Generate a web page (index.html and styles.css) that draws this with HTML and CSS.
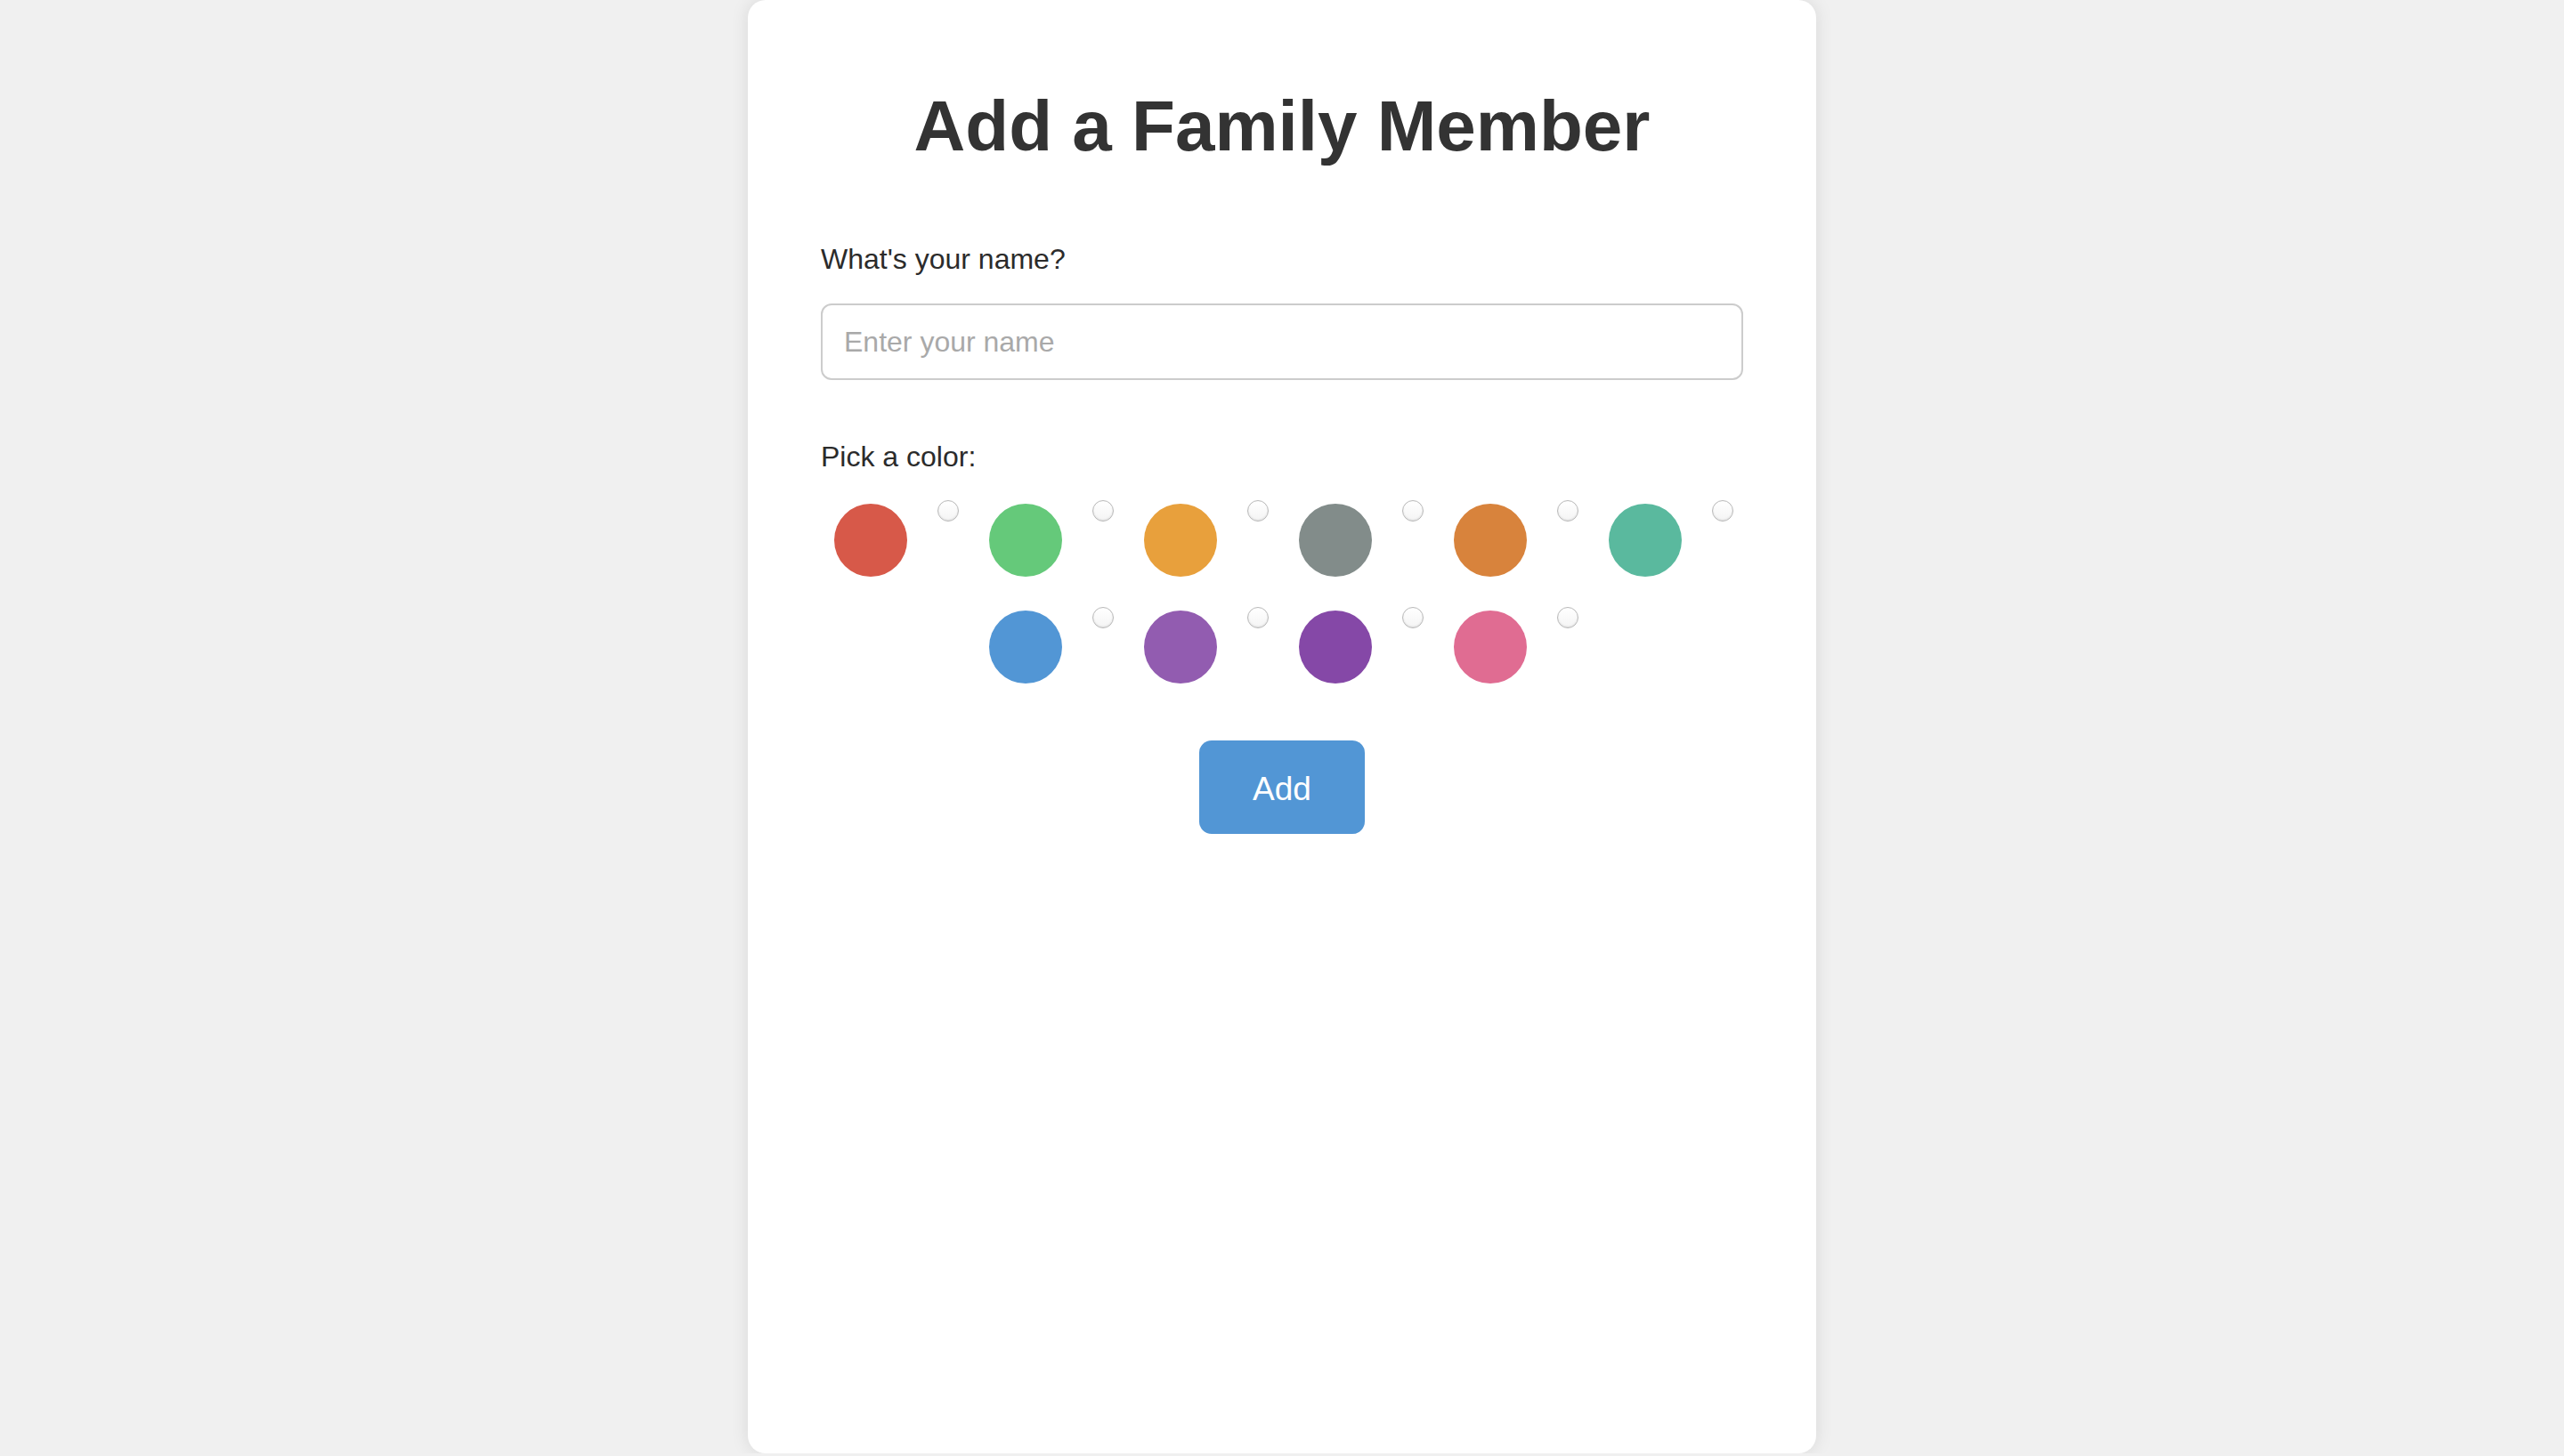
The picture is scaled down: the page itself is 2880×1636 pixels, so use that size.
FILE: index.html
```html
<!DOCTYPE html>
<html lang="en">
<head>
<meta charset="utf-8">
<title>Add a Family Member</title>
<link rel="stylesheet" href="styles.css">
</head>
<body>
<main class="card">
  <h1 class="title">Add a Family Member</h1>
  <form class="form">
    <label class="field-label" for="name">What's your name?</label>
    <input class="text-input" id="name" type="text" placeholder="Enter your name">
    <div class="field-label color-label">Pick a color:</div>
    <div class="swatches">
      <label class="swatch"><span class="dot c-red"></span><input class="radio" type="radio" name="color"></label>
      <label class="swatch"><span class="dot c-green"></span><input class="radio" type="radio" name="color"></label>
      <label class="swatch"><span class="dot c-yellow"></span><input class="radio" type="radio" name="color"></label>
      <label class="swatch"><span class="dot c-gray"></span><input class="radio" type="radio" name="color"></label>
      <label class="swatch"><span class="dot c-orange"></span><input class="radio" type="radio" name="color"></label>
      <label class="swatch"><span class="dot c-teal"></span><input class="radio" type="radio" name="color"></label>
      <label class="swatch"><span class="dot c-blue"></span><input class="radio" type="radio" name="color"></label>
      <label class="swatch"><span class="dot c-purple"></span><input class="radio" type="radio" name="color"></label>
      <label class="swatch"><span class="dot c-violet"></span><input class="radio" type="radio" name="color"></label>
      <label class="swatch"><span class="dot c-pink"></span><input class="radio" type="radio" name="color"></label>
    </div>
    <button class="add-btn" type="button">Add</button>
  </form>
</main>
</body>
</html>
```
FILE: styles.css
```css
html, body {
  margin: 0;
  padding: 0;
}

body {
  background: #f0f0f0;
  font-family: "Liberation Sans", Arial, Helvetica, sans-serif;
  color: #333;
}

.card {
  display: block;
  box-sizing: border-box;
  width: 1200px;
  height: 1633px;
  margin: 0 auto;
  padding: 96px 82px 0;
  background: #ffffff;
  border-radius: 20px;
  box-shadow: 0 0 20px rgba(0, 0, 0, 0.1);
}

.title {
  margin: 0;
  font-size: 80px;
  line-height: 92px;
  font-weight: bold;
  color: #333;
  text-align: center;
}

.form {
  display: block;
}

.field-label {
  display: block;
  margin-top: 85px;
  font-size: 32px;
  line-height: 37px;
  color: #2b2b2b;
}

.text-input {
  display: block;
  box-sizing: border-box;
  width: 100%;
  height: 86px;
  margin-top: 31px;
  padding: 0 24px;
  border: 2px solid #cccccc;
  border-radius: 12px;
  font-family: inherit;
  font-size: 32px;
  color: #333;
  background: #fff;
  outline: none;
}

.text-input::placeholder {
  color: #a9a9a9;
}

.color-label {
  margin-top: 68px;
}

.swatches {
  display: flex;
  flex-wrap: wrap;
  justify-content: center;
  row-gap: 34px;
  margin: 30px -10px 0;
}

.swatch {
  display: flex;
  align-items: flex-start;
  box-sizing: border-box;
  width: 174px;
  padding-left: 19px;
  gap: 34px;
  cursor: pointer;
}

.dot {
  display: block;
  width: 82px;
  height: 82px;
  margin-top: 4px;
  border-radius: 50%;
}

.radio {
  -webkit-appearance: none;
  appearance: none;
  box-sizing: border-box;
  width: 24px;
  height: 24px;
  margin: 0;
  border: 1.5px solid #b9b9b9;
  border-radius: 50%;
  background: linear-gradient(#ffffff, #f4f4f4);
  box-shadow: inset 0 -1px 2px rgba(0, 0, 0, 0.1);
}

.c-red { background: #d75949; }
.c-green { background: #65c97a; }
.c-yellow { background: #e8a03c; }
.c-gray { background: #828c8a; }
.c-orange { background: #d8833c; }
.c-teal { background: #5ab99e; }
.c-blue { background: #5296d5; }
.c-purple { background: #925cb0; }
.c-violet { background: #8548a7; }
.c-pink { background: #e06c92; }

.add-btn {
  display: block;
  margin: 64px auto 0;
  padding: 34px 60px 30px;
  border: none;
  border-radius: 14px;
  background: #5296d5;
  color: #ffffff;
  font-family: inherit;
  font-size: 37px;
  line-height: 41px;
  cursor: pointer;
}
```
